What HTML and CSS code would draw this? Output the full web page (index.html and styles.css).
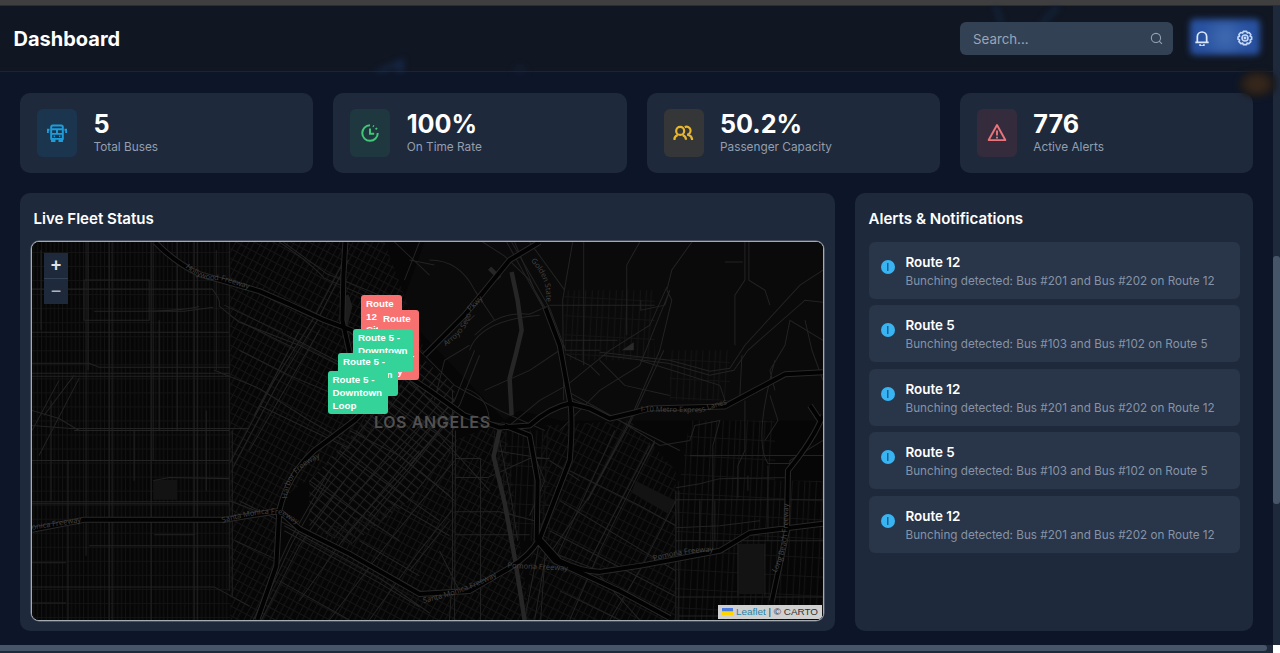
FILE: index.html
```html
<!DOCTYPE html>
<html lang="en">
<head>
<meta charset="utf-8">
<title>Dashboard</title>
<link rel="stylesheet" href="styles.css">
</head>
<body>
<div class="topstrip"></div>
<div class="shell">
  <div class="page">
    <header class="header">
      <svg class="header-art" viewBox="0 0 1273 66" aria-hidden="true">
        <path d="M372 66 404 52 404 66 396 66 396 60 384 66Z" fill="#1c3566"/>
        <path d="M512 66 520 58 528 66Z" fill="#18253e"/>
        <path d="M995 0 1002 18 M1058 0 1040 20" stroke="#16304f" stroke-width="5"/>
      </svg>
      <h1 class="title">Dashboard</h1>
      <div class="tools">
        <div class="search"><span>Search...</span>
          <svg width="13" height="13" viewBox="0 0 24 24" fill="none" stroke="#94a3b8" stroke-width="2"><circle cx="11" cy="11" r="8.500"/><path d="m17 17 5 5"/></svg>
        </div>
        <div class="actions">
          <svg width="16" height="16" viewBox="0 0 24 24" fill="none" stroke="#dbe7fb" stroke-width="2.600" stroke-linejoin="round"><path d="M5 18v-8a7 7 0 0 1 14 0v8M2 18.500h20M9 21.500a3 3 0 0 0 6 0"/></svg>
          <svg width="16" height="16" viewBox="0 0 24 24" fill="none" stroke="#c7dafa" stroke-width="2.400" stroke-linejoin="round"><path d="M9.500 2h5l1 2.500 2.600-.8 2.600 3.200-1 2.600 2.300 1v3.500l-2.300 1 1 2.500-3 3-2.600-1L14.500 22h-5l-1-2.500-2.600 1-3-3 1-2.500-2.400-1v-3.500l2.400-1-1-2.600 2.600-3.200 3 .8Z"/><circle cx="12" cy="12" r="4.500"/><circle cx="12" cy="12" r="1"/></svg>
        </div>
      </div>
    </header>
    <main class="main">
      <section class="stats">
        <div class="card">
          <div class="icon blue"><svg width="20" height="20" viewBox="0 0 24 24" fill="none" stroke="currentColor" stroke-width="2.300"><path d="M5 19V5q0-2 2-2h10q2 0 2 2v14ZM5 7.500h14M5 13h14M6 19v2.500h3V19M15 19v2.500h3V19M3 8H1v4M21 8h2v4M12 8v5M8 16h1.500M14.500 16H16"/></svg></div>
          <div><div class="value">5</div><div class="label">Total Buses</div></div>
        </div>
        <div class="card">
          <div class="icon green"><svg width="20" height="20" viewBox="0 0 24 24" fill="none" stroke="currentColor" stroke-width="2.400"><path d="M12 2.800A9.300 9.300 0 1 0 21.300 12M12 6.500V13h5M15.500 3.500l1.200.600M19 6l1.200 1.700"/></svg></div>
          <div><div class="value">100%</div><div class="label">On Time Rate</div></div>
        </div>
        <div class="card">
          <div class="icon yellow"><svg width="21" height="20" viewBox="0 0 25 24" fill="none" stroke="currentColor" stroke-width="2.600"><circle cx="8.500" cy="9.500" r="4.800"/><path d="M1.500 20c0-3 2-4.500 4-5.500M11.500 14.500c2 1 4 2.500 4 5.500M14 5a4.800 4.800 0 1 1 3 9c3 .6 5.500 2.500 5.500 5.500M1 19h2M21.500 19h2.500"/></svg></div>
          <div><div class="value">50.2%</div><div class="label">Passenger Capacity</div></div>
        </div>
        <div class="card">
          <div class="icon red"><svg width="20" height="20" viewBox="0 0 24 24" fill="none" stroke="currentColor" stroke-width="2.300" stroke-linejoin="round"><path d="M12 2.500 22 20.500H2ZM12 9v6M12 16.500v2"/></svg></div>
          <div><div class="value">776</div><div class="label">Active Alerts</div></div>
        </div>
      </section>
      <section class="panels">
        <div class="panel">
          <h2>Live Fleet Status</h2>
          <div class="map">
            <svg class="tiles" viewBox="33 242 790 377" preserveAspectRatio="none">
              <defs>
                <pattern id="west" width="21" height="14" patternUnits="userSpaceOnUse"><path d="M0 .5H21M.5 0V14M5 0V14M9.500 0V14M13.500 0V14M17.500 0V14" stroke="#131313" fill="none"/></pattern>
                <pattern id="mid" width="23" height="17" patternUnits="userSpaceOnUse" patternTransform="rotate(28)"><path d="M0 .5H23M.5 0V17M6 0V17M12 0V17M17 0V17M0 9H23" stroke="#151515" fill="none"/></pattern>
                <pattern id="core" width="9" height="7" patternUnits="userSpaceOnUse" patternTransform="rotate(38)"><path d="M0 .5H9M.5 0V7" stroke="#202020" fill="none"/></pattern>
                <pattern id="east" width="24" height="19" patternUnits="userSpaceOnUse" patternTransform="rotate(3)"><path d="M0 .5H24M.5 0V19M7 0V19M13 0V19M18 0V19" stroke="#141414" fill="none"/></pattern>
                <pattern id="se" width="24" height="20" patternUnits="userSpaceOnUse" patternTransform="rotate(27)"><path d="M0 .5H24M.5 0V20M6 0V20M12 0V20M18 0V20M0 10H24" stroke="#141414" fill="none"/></pattern>
                <path id="r-hw" d="M186 267Q200 281 222 280L256 291"/>
                <path id="r-hb" d="M288 498Q288 470 325 455"/>
                <path id="r-sm1" d="M33 529 90 520"/>
                <path id="r-sm2" d="M223 522Q265 510 282 514L305 528"/>
                <path id="r-sm3" d="M424 602Q470 592 507 570"/>
                <path id="r-pom1" d="M508 567 575 570"/>
                <path id="r-pom2" d="M654 560Q690 550 720 551"/>
                <path id="r-i10" d="M641 411 700 412 732 402"/>
                <path id="r-i5" d="M531 261Q550 280 546 305"/>
                <path id="r-lb" d="M776 572Q790 550 788 500"/>
                <path id="r-us" d="M446 346Q470 330 472 310L495 287"/>
              </defs>
              <path fill="#060606" d="M33 242H823V619H33Z"/>
              <path fill="#0a0a0a" d="M425 242H823V420L560 420 520 410 505 420 400 310Z"/>
              <path fill="url(#west)" d="M33 242H231V619H33Z"/>
              <path fill="url(#mid)" d="M231 242H385L425 350 375 430 280 500 278 619H231Z"/>
              <path fill="url(#core)" d="M375 410 425 360 455 385 455 445 410 500 350 545 310 525 310 480Z"/>
              <path fill="url(#mid)" d="M300 535 410 500 455 440 505 420 530 619H250Z"/>
              <path fill="url(#se)" d="M545 425 630 420 676 470V619H525Z"/>
              <path fill="url(#east)" d="M565 290H655V360H565ZM676 480H823V619H676ZM490 430H550V540H510ZM690 420H775V480H680ZM670 350H730V400H670Z"/>
              <g fill="#131313"><path d="M154 479h24v20h-24ZM636 480 676 500 668 513 632 492ZM738 543h26v50h-26Z"/><path d="M341 298l8-4 4 12-5 20-6-2Z" fill="#1e1e1e"/><path d="M622 350 634 342V350Z" fill="#2a2a2a"/></g>
              <!-- streets -->
              <g class="street">
                <path d="M87 242V555M89 242V370M110 242V619M113 242V619M152 242V619M154 242V460M178 242V430M195 242V619M198 242V619M217 250V370M230 242V590M233 430V595M42 250V330M52 400V500M69 460V619M135 430V480M160 320V430M207 410V490"/>
                <path d="M33 289H213Q222 300 220 306L240 322 300 345 360 375M95 311H185L214 307M33 332H230M33 363H90L100 367H231M33 373H230M33 376H230M33 425 72 428H250M75 430H230M33 460H230M33 501H230M33 503H230M90 545H230M33 586H215L250 605M33 562H67M33 602H67M154 480 170 477 230 478M155 534H196M85 320V280H150V320H85M145 311Q190 310 200 306"/>
                <path d="M45 415 75 375M33 430 60 380M40 455 80 378M33 410 60 418 80 430M231 462 275 380 315 317 346 258M234 466 278 384 318 320 349 260M250 450 320 330M255 415 300 330M215 370 260 388 310 420 345 440M280 242Q310 262 325 278L375 300M284 242 328 274 380 295M240 350 290 375 350 400M242 322 295 348M260 405 350 448M225 305 280 331 340 362"/>
                <path d="M254 619 290 540 330 470M257 619 293 542 333 472M262 619 300 545 345 480M285 525 380 577 430 612M285 530 378 581 420 606M240 500 300 530M236 540 280 560M300 600 350 530 420 450M330 619 390 540 455 460M370 619 420 550 452 510M280 580 350 619M360 540 420 575M390 500 450 535M420 470 455 500M310 480 400 540M340 450 440 520M230 500 270 515"/>
                <path d="M375 300 384 330 405 375 450 420M398 330 425 355 455 385 500 410 545 430M405 370 440 395 455 410 495 425M380 395 440 435 490 490M350 430 400 455 450 495M425 420 350 500M440 430 370 515M453 390V570L450 619M456 430 455 619M456 458H481V619M455 477H488L530 458H550M455 511H500L535 520M455 534H530M400 460 455 400 475 350M410 465 460 405 480 355M435 400 445 360 470 345M450 520 410 570M440 550 460 590"/>
                <path d="M507 242 545 310 560 340M512 242 550 308 566 350M530 242 565 290M573 242 563 300 564 400M584 242V365M640 242 627 265V335M641 300V310L665 305 670 290 640 365 600 390 560 430M692 242 672 270 667 290M667 290 672 300 660 350 630 420 590 495 545 560 535 619M664 350 630 423 588 500M550 305H655M565 340H618M565 350H600M567 354 590 365 600 375M600 352 670 360 710 371 730 368 745 345 800 285 823 270M602 355 668 363 710 375 734 370 748 350 805 300 823 302M745 242V280L735 295V345M749 242V280L765 290 770 305M725 262H743"/>
                <path d="M465 315 470 320 475 315M430 260Q460 260 475 290L495 320M410 260 435 265M475 335Q500 310 530 314L550 305M470 350Q480 320 540 315M485 390 530 370 560 350M465 388Q490 395 490 425M483 420 510 425 540 400 567 385 610 350 650 325 667 287M480 240 505 256 530 280 550 320M515 242 535 290 548 312M420 242 405 280M395 242 430 275"/>
                <path d="M566 390 620 420 660 445 690 440 695 425 720 420 713 445V550M570 397 630 425 680 450M600 360 625 385 670 395M640 360 720 385 725 400M742 355 740 395M770 395 778 420 765 440M823 340 790 320 785 345 770 370 775 390M745 400V450L738 465V497M690 455H823M676 490V619M679 490V619M676 499H823M676 540H823M676 527 720 525 760 520M700 500V540M715 500V540M768 465V540M676 596H823M679 615H823M765 543V595M738 543V595M748 475V490M676 487 700 483 720 478 790 477V460L823 440M775 360Q753 440 768 463H790"/>
                <path d="M570 470 640 505 676 525M560 500 676 570M550 530 675 595M615 430 555 560M655 440 600 550 570 619M650 445 590 560M640 470 655 442M676 500 640 570 610 619M560 590 620 619M600 575 640 619M580 480 550 460M548 550 600 570M535 455 545 480 530 515M540 540 525 619M546 545 541 619M495 450 545 458M500 440 512 500 518 540M805 320 812 350 823 380"/>
              </g>
              <!-- river -->
              <path fill="none" stroke="#262626" stroke-width="4.500" stroke-linejoin="round" d="M490 268 500 278M512 272 518 300 522 330 516 355 510 378 512 415M501 425 494 456 505 502 516 562 525 619"/>
              <!-- freeways -->
              <g class="fw-edge">
                <path d="M156 242Q175 262 200 274L260 291 290 304 325 320 352 330 385 360 430 390 465 415 500 427 530 425 Q550 407 570 403L590 408 610 418 635 412 650 408 725 406 755 390 785 374 823 372"/>
                <path d="M346 242 344 275 343 320 352 360M385 390 355 420 315 450Q288 475 280 510L277 565 258 619M33 529 85 519H225L280 510 300 528 350 553 420 593 470 590 510 567Q530 555 540 538L570 460Q573 425 571 405L560 345 546 308M540 538 560 560Q580 570 600 571L640 565 720 550 750 532 823 523M538 540 555 560 620 590 670 617M425 355 465 315 510 260 540 242M505 425 530 435 538 480 537 540M823 415Q813 440 788 470L787 530 772 600M820 420 810 405"/>
              </g>
              <g class="fw">
                <path d="M156 242Q175 262 200 274L260 291 290 304 325 320 352 330 385 360 430 390 465 415 500 427 530 425 Q550 407 570 403L590 408 610 418 635 412 650 408 725 406 755 390 785 374 823 372"/>
                <path d="M346 242 344 275 343 320 352 360M385 390 355 420 315 450Q288 475 280 510L277 565 258 619M33 529 85 519H225L280 510 300 528 350 553 420 593 470 590 510 567Q530 555 540 538L570 460Q573 425 571 405L560 345 546 308M540 538 560 560Q580 570 600 571L640 565 720 550 750 532 823 523M538 540 555 560 620 590 670 617M425 355 465 315 510 260 540 242M505 425 530 435 538 480 537 540M823 415Q813 440 788 470L787 530 772 600M820 420 810 405"/>
              </g>
              <g class="road-name">
                <text><textPath href="#r-hw">Hollywood Freeway</textPath></text>
                <text><textPath href="#r-hb">Harbor Freeway</textPath></text>
                <text><textPath href="#r-sm1">onica Freeway</textPath></text>
                <text><textPath href="#r-sm2">Santa Monica Freeway</textPath></text>
                <text><textPath href="#r-sm3">Santa Monica Freeway</textPath></text>
                <text><textPath href="#r-pom1">Pomona Freeway</textPath></text>
                <text><textPath href="#r-pom2">Pomona Freeway</textPath></text>
                <text><textPath href="#r-i10">I-10 Metro Express Lanes</textPath></text>
                <text><textPath href="#r-i5">Golden State</textPath></text>
                <text><textPath href="#r-lb">Long Beach Freeway</textPath></text>
                <text><textPath href="#r-us">Arroyo Seco Pkwy</textPath></text>
              </g>
              <text class="city" x="374.500" y="428" textLength="116">LOS ANGELES</text>
            </svg>
            <div class="zoom"><span>+</span><span>−</span></div>
            <div class="marker late m1">Route<br>12 -<br>City<br>Center<br>Way</div>
            <div class="marker late m2">Route<br>12 -<br>City<br>Center<br>Way</div>
            <div class="marker ok m3">Route 5 -<br>Downtown<br>Loop</div>
            <div class="marker ok m4">Route 5 -<br>Downtown<br>Loop</div>
            <div class="marker ok m5">Route 5 -<br>Downtown<br>Loop</div>
            <div class="credit"><svg width="11" height="7" viewBox="0 0 11 7"><path fill="#4c7be1" d="M0 0h11v3.500H0Z"/><path fill="#ffd500" d="M0 3.500h11V7H0Z"/></svg><span><b>Leaflet</b> | © CARTO</span></div>
          </div>
        </div>
        <div class="panel">
          <h2>Alerts &amp; Notifications</h2>
          <div class="alerts">
            <div class="alert"><i class="info"></i><div><div class="route">Route 12</div><div class="text">Bunching detected: Bus #201 and Bus #202 on Route 12</div></div></div>
            <div class="alert"><i class="info"></i><div><div class="route">Route 5</div><div class="text">Bunching detected: Bus #103 and Bus #102 on Route 5</div></div></div>
            <div class="alert"><i class="info"></i><div><div class="route">Route 12</div><div class="text">Bunching detected: Bus #201 and Bus #202 on Route 12</div></div></div>
            <div class="alert"><i class="info"></i><div><div class="route">Route 5</div><div class="text">Bunching detected: Bus #103 and Bus #102 on Route 5</div></div></div>
            <div class="alert"><i class="info"></i><div><div class="route">Route 12</div><div class="text">Bunching detected: Bus #201 and Bus #202 on Route 12</div></div></div>
          </div>
        </div>
      </section>
    </main>
    <div class="hscroll"><div class="hthumb"></div></div>
  </div>
  <div class="side"><div class="vscroll"><div class="vthumb"></div></div><div class="corner"></div></div>
</div>
<div class="blob"></div>
</body>
</html>
```
FILE: styles.css
```css
* { box-sizing: border-box; }
body {
  margin: 0;
  height: 653px;
  overflow: hidden;
  display: flex;
  flex-direction: column;
  position: relative;
  background: #0d1628;
  color: #fff;
  font-family: Inter, "Liberation Sans", sans-serif;
}
h1, h2 { margin: 0; }
.topstrip { height: 6px; flex: none; background: #403f40; border-bottom: 1px solid #292d35; }
.shell { flex: 1; display: flex; min-height: 0; }
.page { flex: 1; min-width: 0; display: flex; flex-direction: column; }

.header {
  position: relative;
  height: 66px;
  flex: none;
  display: flex;
  align-items: center;
  justify-content: space-between;
  padding: 0 13px 0 13.5px;
  background: #101622;
  border-bottom: 1px solid #19243a;
}
.header-art { position: absolute; inset: 0; width: 1273px; height: 66px; filter: blur(3px); opacity: .5; }
.title { position: relative; font-size: 20px; font-weight: 700; }
.tools { position: relative; display: flex; align-items: center; gap: 17px; }
.search {
  width: 213px;
  height: 33px;
  padding: 0 10px 0 13px;
  display: flex;
  align-items: center;
  justify-content: space-between;
  background: #334155;
  border-radius: 6px;
  color: #9aa6b7;
  font-size: 13.3px;
}
.actions {
  position: relative;
  width: 70px;
  height: 33px;
  padding: 0 7px 2px 4px;
  display: flex;
  align-items: center;
  justify-content: space-between;
}
.actions::before {
  content: "";
  position: absolute;
  inset: -3px 0 0 0;
  background: radial-gradient(circle at 50% 50%, #416bb0, #2851a0 60%);
  border-radius: 5px;
  filter: blur(3px);
}
.actions svg { position: relative; }

.main { flex: 1; padding: 20.5px 20px 0; display: flex; flex-direction: column; gap: 20px; }
.stats { display: grid; grid-template-columns: repeat(4, 1fr); gap: 20px; }
.card {
  height: 80px;
  padding: 0 17px;
  display: flex;
  align-items: center;
  gap: 16.5px;
  background: #1e293b;
  border-radius: 10px;
}
.icon { width: 40px; height: 48px; border-radius: 6px; display: flex; align-items: center; justify-content: center; }
.blue { background: #1b354f; color: #1d9edb; }
.green { background: #1f383f; color: #41c777; }
.yellow { background: #353637; color: #e9b72c; }
.red { background: #342c3d; color: #e9747a; }
.value { font-size: 25.2px; line-height: 30px; font-weight: 700; }
.label { font-size: 11.8px; line-height: 17px; color: #939fb0; }

.panels { display: grid; grid-template-columns: 815px 1fr; gap: 20px; height: 438px; }
.panel { background: #1e293b; border-radius: 10px; padding: 16px 11px 10px; display: flex; flex-direction: column; }
.panel h2 { font-size: 15.1px; line-height: 19px; font-weight: 600; padding-left: 2.5px; margin-bottom: 13px; }

.map { position: relative; flex: 1; border: 1px solid #a4abb3; box-shadow: 0 0 0 .5px #737b87; border-radius: 8px; overflow: hidden; background: #060606; }
.tiles { display: block; width: 100%; height: 100%; }
.street { fill: none; stroke: #232323; stroke-width: 1; }
.fw-edge { fill: none; stroke: #282828; stroke-width: 6; stroke-linejoin: round; }
.fw { fill: none; stroke: #020202; stroke-width: 4; stroke-linejoin: round; }
.road-name { font: 7.5px "Open Sans", sans-serif; fill: #454545; }
.city { font: 600 16px Inter, sans-serif; fill: #515151; }
.zoom {
  position: absolute;
  left: 12px;
  top: 11px;
  width: 24px;
  display: flex;
  flex-direction: column;
  background: #1e293b;
  color: #dce3eb;
  font: bold 18px/25px "Liberation Sans", sans-serif;
  text-align: center;
}
.zoom span + span { border-top: 1px solid #334155; font-weight: 400; color: #aab3bf; }
.marker {
  position: absolute;
  padding: 2px 5px;
  border-radius: 3px;
  font: bold 9.8px/13.3px "Liberation Sans", sans-serif;
  white-space: nowrap;
}
.late { width: 41px; height: 70px; background: #f87171; }
.ok { width: 60px; height: 43px; background: #34d399; }
.m1 { left: 329px; top: 53px; }
.m2 { left: 346px; top: 68px; }
.m3 { left: 321px; top: 87px; }
.m4 { left: 306px; top: 111px; }
.m5 { left: 295.5px; top: 129px; }
.credit {
  position: absolute;
  right: 1px;
  bottom: 1px;
  height: 14px;
  padding: 0 4px;
  display: flex;
  align-items: center;
  gap: 3px;
  background: #d0d0d0;
  color: #333;
  font: 9.9px/14px "Liberation Sans", sans-serif;
  white-space: nowrap;
}
.credit b { font-weight: 400; color: #2684aa; }

.alerts { display: flex; flex-direction: column; gap: 6.4px; padding: 1.5px 2px 0 2.5px; }
.alert { height: 57px; display: flex; gap: 11px; padding: 11px 12px; background: #293548; border-radius: 6px; }
.info {
  width: 14px;
  height: 14px;
  flex: none;
  margin-top: 7px;
  border-radius: 50%;
  background: linear-gradient(#1c5f8e, #1c5f8e) center / 1.5px 8px no-repeat #38b4f2;
}
.route { font-size: 13.4px; line-height: 19px; font-weight: 600; }
.text { font-size: 11.7px; line-height: 18px; color: #8693a6; white-space: nowrap; }

.hscroll { height: 8px; flex: none; background: #1e293b; }
.hthumb { width: 1267px; height: 6px; background: #475569; border-radius: 0 3px 3px 0; }
.side { width: 7px; display: flex; flex-direction: column; }
.vscroll { flex: 1; padding-top: 250px; background: #1e293b; }
.vthumb { height: 248px; background: #475569; border-radius: 3px; }
.corner { height: 8px; background: #fff; }
.blob {
  position: absolute;
  left: 1238px;
  top: 70px;
  width: 38px;
  height: 28px;
  border-radius: 50% 40% 45% 50%;
  background: radial-gradient(#35261b 25%, #14161a 75%);
  filter: blur(2.5px);
}
```
